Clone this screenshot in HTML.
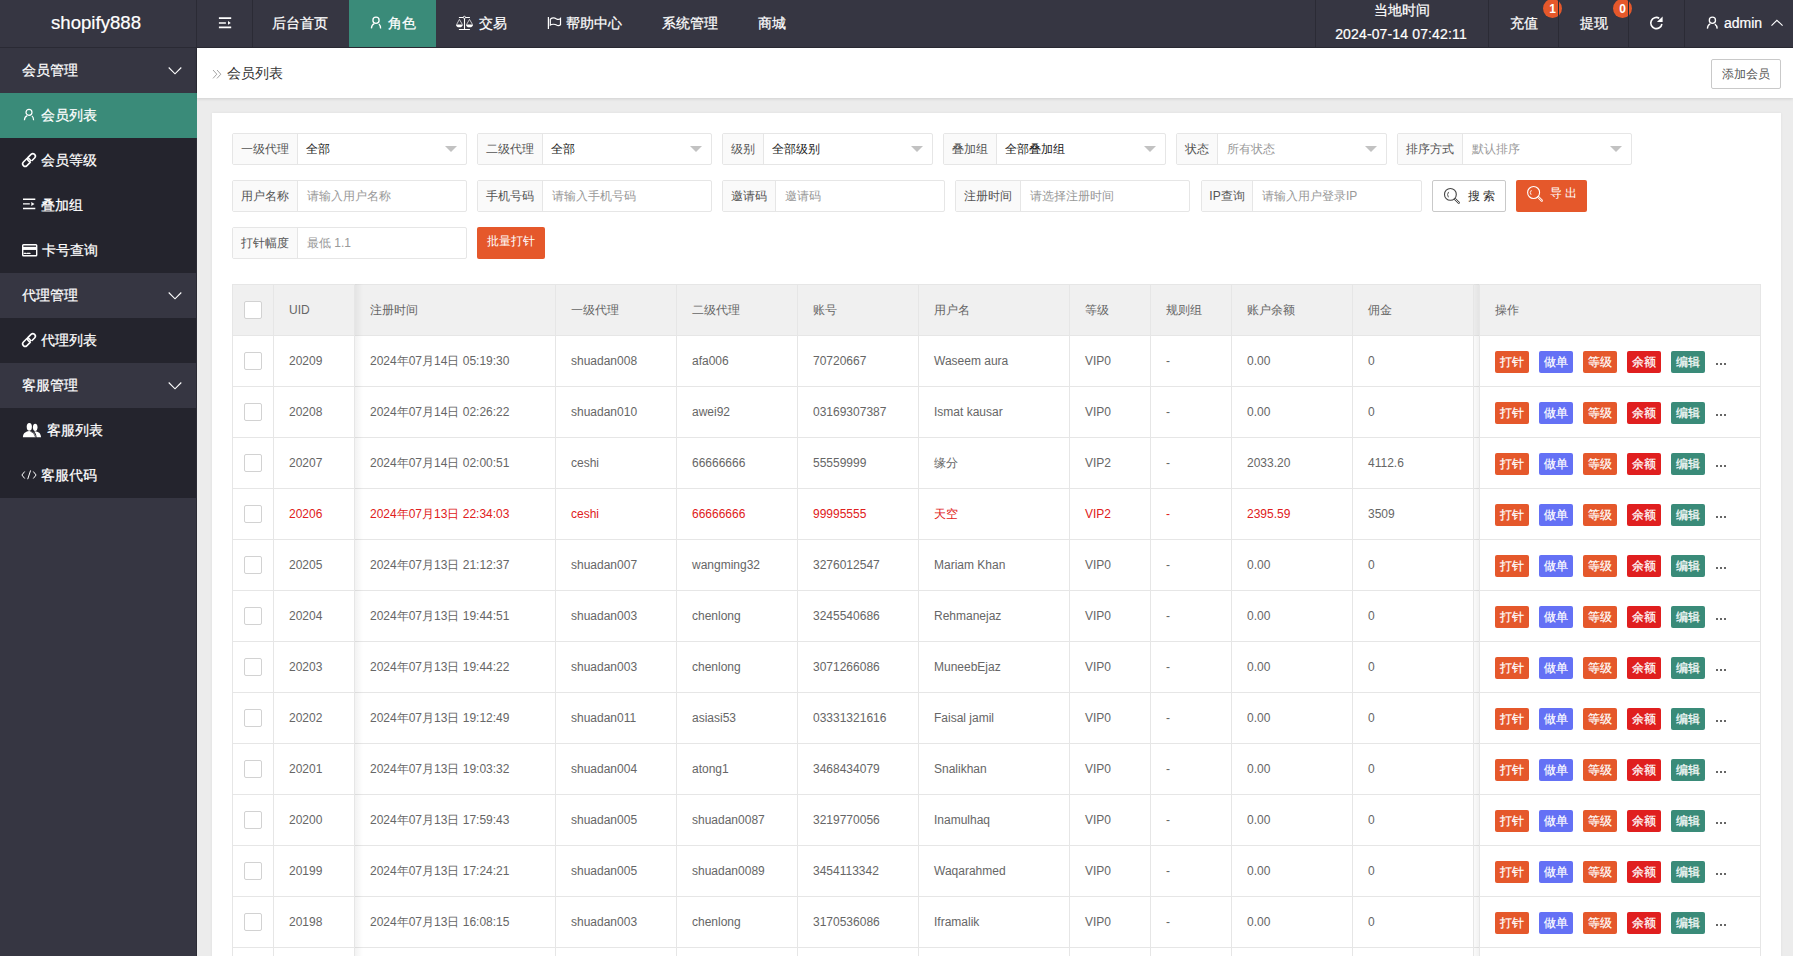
<!DOCTYPE html>
<html><head><meta charset="utf-8"><style>
*{margin:0;padding:0;box-sizing:border-box}
html,body{width:1793px;height:956px;overflow:hidden}
body{position:relative;font-family:"Liberation Sans",sans-serif;font-size:12px;color:#666;background:#ececec}
.abs{position:absolute}
#hdr{position:absolute;left:0;top:0;width:1793px;height:48px;background:#363642;border-bottom:1px solid #2a2a34}
.logo{position:absolute;left:-2px;top:0;width:196px;height:47px;line-height:46px;text-align:center;color:#fff;font-size:18.6px;-webkit-text-stroke:0.2px #fff}
.hsep{position:absolute;top:0;width:1px;height:47px;background:#2b2b35}
.nav{position:absolute;top:0;height:47px;line-height:46px;color:#fff;font-size:14px;white-space:nowrap;-webkit-text-stroke:0.22px #fff}
.nav.on{background:#3a8b79}
.ico{position:absolute}
.I,.L{position:absolute;overflow:visible}
.badge{position:absolute;top:-1px;width:19px;height:19px;border-radius:50%;background:#e5582b;color:#fff;font-size:12px;line-height:21px;text-align:center;font-weight:bold}
#side{position:absolute;left:0;top:48px;width:197px;height:908px;background:#363642;border-right:1px solid #2b2b35}
.sg{position:absolute;left:0;width:196px;height:45px;line-height:45px;color:#fff;font-size:14px;-webkit-text-stroke:0.22px #fff}
.si{position:absolute;left:0;width:196px;height:45px;line-height:45px;color:#fff;font-size:14px;background:#24242d;-webkit-text-stroke:0.22px #fff}
.si.on{background:#3a8b79;width:197px}
.si span,.sg span{position:absolute;top:0}
#crumb{position:absolute;left:197px;top:48px;width:1596px;height:50px;background:#fff;box-shadow:0 1px 3px rgba(0,0,0,.12)}
.card{position:absolute;left:212px;top:113px;width:1569px;height:860px;background:#fff;box-shadow:0 0 3px rgba(0,0,0,.06)}
.ig{position:absolute;height:32px;border:1px solid #e6e6e6;border-radius:2px;background:#fff}
.ig .lb{position:absolute;left:0;top:0;height:30px;line-height:30px;background:#fafafa;border-right:1px solid #e6e6e6;color:#555;text-align:center;font-size:12px}
.ig .vv{position:absolute;top:0;height:30px;line-height:31px;font-size:12px;color:#222;white-space:nowrap;margin-left:-1px}
.ig .ph{color:#999;margin-left:0}
.tri{position:absolute;top:12px;width:0;height:0;border-left:6px solid transparent;border-right:6px solid transparent;border-top:6px solid #c2c2c2}
.btn{position:absolute;height:32px;line-height:30px;border-radius:2px;font-size:12px;text-align:center;white-space:nowrap}
.tbl{position:absolute;overflow:hidden}
.tbl>div{position:absolute}
.thead{background:#f0f0f0}
.vl{top:0;width:1px;height:100%;background:#e6e6e6}
.hl{left:0;width:100%;height:1px;background:#e6e6e6}
.cb{width:18px;height:18px;border:1px solid #d2d2d2;border-radius:2px;background:#fff}
.th,.td{height:51px;line-height:53px;font-size:12px;color:#666;white-space:nowrap}
.td.red{color:#e02020}
.bx{width:34px;height:22px;line-height:22px;border-radius:2px;color:#fff;text-align:center;font-size:12px;-webkit-text-stroke:0.2px #fff}
.b1{background:#e5582b}.b2{background:#6471f5}.b3{background:#e01f1f}.b4{background:#3a8b79}
.dots{height:51px;line-height:51px;color:#666;font-size:12px}
.shl{top:0;width:8px;height:100%;background:linear-gradient(to right,rgba(0,0,0,.05),rgba(0,0,0,0))}
.shr{top:0;width:5px;height:100%;background:linear-gradient(to right,rgba(0,0,0,.02),rgba(0,0,0,.05))}
.dots{height:3px;line-height:0}
.dots i{display:inline-block;width:2px;height:2px;background:#666;margin-right:2px;vertical-align:top}

</style></head><body>
<div id="hdr">
 <div class="logo">shopify888</div>
 <div class="hsep" style="left:196px"></div>
 <div class="hsep" style="left:252px"></div>
 <div class="nav" style="left:253px;width:96px;padding-left:19px">后台首页</div>
 <div class="nav on" style="left:349px;width:87px"><span style="position:absolute;left:39px">角色</span></div>
 <div class="nav" style="left:436px;width:90px"><span style="position:absolute;left:43px">交易</span></div>
 <div class="nav" style="left:526px;width:116px"><span style="position:absolute;left:40px">帮助中心</span></div>
 <div class="nav" style="left:642px;width:96px;padding-left:20px">系统管理</div>
 <div class="nav" style="left:738px;width:68px;padding-left:20px">商城</div>
 <div class="hsep" style="left:1315px"></div>
 <div class="nav" style="left:1316px;width:172px"><div style="position:absolute;left:0;top:0;width:172px;line-height:20px;text-align:center">当地时间</div><div style="position:absolute;left:-1px;top:24px;width:172px;line-height:20px;text-align:center;letter-spacing:0.14px">2024-07-14 07:42:11</div></div>
 <div class="hsep" style="left:1488px"></div>
 <div class="nav" style="left:1489px;width:69px;padding-left:21px">充值</div>
 <div class="badge" style="left:1543px">1</div>
 <div class="hsep" style="left:1558px"></div>
 <div class="nav" style="left:1559px;width:69px;padding-left:21px">提现</div>
 <div class="badge" style="left:1613px">0</div>
 <div class="hsep" style="left:1628px"></div>
 <div class="hsep" style="left:1684px"></div>
 <div class="nav" style="left:1685px;width:108px"><span style="position:absolute;left:39px">admin</span></div>
</div>
<!-- header icons, page coords -->
<svg class="I" style="left:213px;top:12px" width="24" height="22"><path d="M5.9 6.1h12.3M5.9 11h7M5.9 15.4h12.3" stroke="#fff" stroke-width="1.6" fill="none"/><path d="M15 9l2.8 1.9L15 12.8z" fill="#fff"/></svg>
<svg class="I" style="left:364px;top:12px" width="24" height="22"><circle cx="12" cy="8.3" r="3.1" stroke="#fff" stroke-width="1.3" fill="none"/><path d="M7.4 16.4Q7.6 12.6 10.3 11.6M14.9 11.9Q16.5 13.3 16.6 16.4" stroke="#fff" stroke-width="1.3" fill="none"/></svg>
<svg class="I" style="left:452px;top:12px" width="24" height="22"><path d="M6.9 5.5h11M6.9 17.5h11M12.5 6.5v11" stroke="#fff" stroke-width="1.1" fill="none"/><circle cx="12.4" cy="5.4" r="1.1" stroke="#fff" stroke-width="0.9" fill="#363642"/><path d="M4.7 12.4L7.4 7.4 10.3 12.4M14.6 12.4L17.5 7.4 20.4 12.4" stroke="#fff" stroke-width="0.7" fill="none"/><path d="M4 12.4h6.8a3.4 2.8 0 0 1 -6.8 0zM14 12.4h7a3.5 2.8 0 0 1 -7 0z" fill="#fff"/></svg>
<svg class="I" style="left:543px;top:12px" width="24" height="22"><path d="M5.4 5v12" stroke="#fff" stroke-width="1.2"/><path d="M7.3 7.3C9 5.8 11.8 5.9 13.5 6.9S16.3 7.6 17.5 6.4V12.7C16.3 13.8 14.8 13.8 13.5 13S9 11.8 7.3 13.1Z" stroke="#fff" stroke-width="1.2" fill="none"/></svg>
<svg class="I" style="left:1644px;top:12px" width="24" height="22"><path d="M15.2 6.2A5.6 5.6 0 1 0 17.9 12.0" stroke="#fff" stroke-width="1.6" fill="none"/><path d="M12.9 9.9L18.6 9.9 18.6 4.4Z" fill="#fff"/></svg>
<svg class="I" style="left:1700px;top:12px" width="24" height="22"><circle cx="12.4" cy="8.3" r="3.1" stroke="#fff" stroke-width="1.3" fill="none"/><path d="M7.4 16.6Q7.6 12.8 10.2 11.8M14.9 12.1Q16.9 13.5 17.2 16.6" stroke="#fff" stroke-width="1.3" fill="none"/></svg>
<svg class="I" style="left:1766px;top:12px" width="24" height="22"><path d="M5.5 13.6L10.9 8.3 16.6 13.6" stroke="#fff" stroke-width="1.1" fill="none"/></svg>

<div id="side">
 <div class="sg" style="top:0"><span style="left:22px">会员管理</span></div>
 <div class="si on" style="top:45px"><span style="left:41px">会员列表</span></div>
 <div class="si" style="top:90px"><span style="left:41px">会员等级</span></div>
 <div class="si" style="top:135px"><span style="left:41px">叠加组</span></div>
 <div class="si" style="top:180px"><span style="left:42px">卡号查询</span></div>
 <div class="sg" style="top:225px"><span style="left:22px">代理管理</span></div>
 <div class="si" style="top:270px"><span style="left:41px">代理列表</span></div>
 <div class="sg" style="top:315px"><span style="left:22px">客服管理</span></div>
 <div class="si" style="top:360px"><span style="left:47px">客服列表</span></div>
 <div class="si" style="top:405px"><span style="left:41px">客服代码</span></div>
</div>
<!-- sidebar icons -->
<svg class="I" style="left:160px;top:60px" width="24" height="22"><path d="M8.7 7.5l6.3 6.3 6.3-6.3" stroke="#fff" stroke-width="1.1" fill="none"/></svg>
<svg class="I" style="left:160px;top:285px" width="24" height="22"><path d="M8.7 7.5l6.3 6.3 6.3-6.3" stroke="#fff" stroke-width="1.1" fill="none"/></svg>
<svg class="I" style="left:160px;top:375px" width="24" height="22"><path d="M8.7 7.5l6.3 6.3 6.3-6.3" stroke="#fff" stroke-width="1.1" fill="none"/></svg>
<svg class="I" style="left:18px;top:104px" width="24" height="22"><circle cx="11" cy="8.3" r="3.0" stroke="#fff" stroke-width="1.2" fill="none"/><path d="M6.4 16.2Q6.6 12.5 9.3 11.6M13.9 11.9Q15.5 13.3 15.6 16.2" stroke="#fff" stroke-width="1.2" fill="none"/></svg>
<svg class="L" style="left:15px;top:146px" width="24" height="24"><g transform="rotate(-45 14 14)"><rect x="6.1" y="11.5" width="8.9" height="5" rx="2.5" stroke="#fff" stroke-width="1.6" fill="none"/><rect x="13.0" y="11.5" width="8.9" height="5" rx="2.5" stroke="#fff" stroke-width="1.6" fill="none"/><path d="M13.9 17h1.4" stroke="#24242d" stroke-width="1.3"/></g></svg>
<svg class="L" style="left:15px;top:326px" width="24" height="24"><g transform="rotate(-45 14 14)"><rect x="6.1" y="11.5" width="8.9" height="5" rx="2.5" stroke="#fff" stroke-width="1.6" fill="none"/><rect x="13.0" y="11.5" width="8.9" height="5" rx="2.5" stroke="#fff" stroke-width="1.6" fill="none"/><path d="M13.9 17h1.4" stroke="#24242d" stroke-width="1.3"/></g></svg>
<svg class="I" style="left:15px;top:193px" width="24" height="22"><path d="M8 6.3h12.3M8 10.9h6.8M8 15.5h12.3" stroke="#fff" stroke-width="1.4" fill="none"/><path d="M16.3 8.9l3.2 2-3.2 2z" fill="#fff"/></svg>
<svg class="I" style="left:15px;top:238px" width="24" height="22"><rect x="7.7" y="6.7" width="14" height="11" rx="0.8" stroke="#fff" stroke-width="1.4" fill="none"/><path d="M7.7 10.4h14" stroke="#fff" stroke-width="3.1"/><path d="M9.2 15.4h1.8M12.2 15.4h2.8" stroke="#fff" stroke-width="1.2" stroke-linecap="round"/></svg>
<svg class="I" style="left:15px;top:415px" width="30" height="24"><ellipse cx="14.3" cy="11.8" rx="2.6" ry="3.9" fill="#fff"/><path d="M7.9 22.3c0-3.5 1.8-5.6 6.4-6.3 4 0.6 6.2 2.8 6.6 6.3z" fill="#fff"/><ellipse cx="20.2" cy="12.3" rx="2.3" ry="3.6" fill="#fff"/><path d="M20.5 16.2c3.5 0.5 5.4 2.4 5.6 6.1h-4.5c-0.2-2.5-0.9-4.3-2.4-5.5z" fill="#fff"/><path d="M15.5 16.2Q19.5 17.5 20.6 22.3" stroke="#24242d" stroke-width="0.7" fill="none"/></svg>
<svg class="I" style="left:15px;top:463px" width="24" height="22"><path d="M9.7 8.5L6.9 12l2.8 3.5M18.3 8.5L21.1 12l-2.8 3.5M15.6 7.4L12.7 16.2" stroke="#fff" stroke-width="1" fill="none"/></svg>

<div id="crumb">
 <svg class="I" style="left:12px;top:17px" width="14" height="16"><path d="M4 5l3.8 4.2-3.8 4.2M8 5l3.8 4.2-3.8 4.2" stroke="#999" stroke-width="0.9" fill="none"/></svg>
 <div class="abs" style="left:30px;top:0;line-height:50px;color:#333;font-size:14px">会员列表</div>
 <div class="abs" style="left:1514px;top:11px;width:70px;height:30px;border:1px solid #c9c9c9;border-radius:2px;line-height:28px;text-align:center;color:#555;font-size:12px">添加会员</div>
</div>

<div class="card"></div>

<div class="ig" style="left:232px;top:133px;width:235px"><div class="lb" style="width:65px">一级代理</div><div class="vv" style="left:74px">全部</div><div class="tri" style="left:212px"></div></div>
<div class="ig" style="left:477px;top:133px;width:235px"><div class="lb" style="width:65px">二级代理</div><div class="vv" style="left:74px">全部</div><div class="tri" style="left:212px"></div></div>
<div class="ig" style="left:722px;top:133px;width:211px"><div class="lb" style="width:41px">级别</div><div class="vv" style="left:50px">全部级别</div><div class="tri" style="left:188px"></div></div>
<div class="ig" style="left:943px;top:133px;width:223px"><div class="lb" style="width:53px">叠加组</div><div class="vv" style="left:62px">全部叠加组</div><div class="tri" style="left:200px"></div></div>
<div class="ig" style="left:1176px;top:133px;width:211px"><div class="lb" style="width:41px">状态</div><div class="vv ph" style="left:50px">所有状态</div><div class="tri" style="left:188px"></div></div>
<div class="ig" style="left:1397px;top:133px;width:235px"><div class="lb" style="width:65px">排序方式</div><div class="vv ph" style="left:74px">默认排序</div><div class="tri" style="left:212px"></div></div>

<div class="ig" style="left:232px;top:180px;width:235px"><div class="lb" style="width:65px">用户名称</div><div class="vv ph" style="left:74px">请输入用户名称</div></div>
<div class="ig" style="left:477px;top:180px;width:235px"><div class="lb" style="width:65px">手机号码</div><div class="vv ph" style="left:74px">请输入手机号码</div></div>
<div class="ig" style="left:722px;top:180px;width:223px"><div class="lb" style="width:53px">邀请码</div><div class="vv ph" style="left:62px">邀请码</div></div>
<div class="ig" style="left:955px;top:180px;width:235px"><div class="lb" style="width:65px">注册时间</div><div class="vv ph" style="left:74px">请选择注册时间</div></div>
<div class="ig" style="left:1201px;top:180px;width:221px"><div class="lb" style="width:51px">IP查询</div><div class="vv ph" style="left:60px">请输入用户登录IP</div></div>
<div class="btn" style="left:1432px;top:180px;width:74px;border:1px solid #c9c9c9;background:#fff;color:#333"><span style="position:absolute;left:35px">搜 索</span></div>
<svg class="I" style="left:1440px;top:185px" width="24" height="22"><circle cx="10.4" cy="9.4" r="5.9" stroke="#444" stroke-width="1.1" fill="none"/><path d="M8.6 6.9Q6.6 9.4 8.4 12.3" stroke="#444" stroke-width="0.9" fill="none"/><path d="M15.2 14.2l3.6 3.6" stroke="#444" stroke-width="2.3" stroke-linecap="round"/><path d="M15.2 14.2l3.6 3.6" stroke="#fff" stroke-width="0.8" stroke-linecap="round"/></svg>
<div class="btn" style="left:1516px;top:180px;width:71px;background:#e5582b;color:#fff"><span style="position:absolute;left:34px;top:-2px">导 出</span></div>
<svg class="I" style="left:1523px;top:181px" width="24" height="24"><circle cx="10.6" cy="11.5" r="6" stroke="#fff" stroke-width="1.1" fill="none"/><path d="M8.4 9.2Q6.3 11.4 8.1 13.8" stroke="#fff" stroke-width="0.9" fill="none"/><path d="M15.5 16.3l3.3 3.3" stroke="#fff" stroke-width="2.3" stroke-linecap="round"/><path d="M15.5 16.3l3.3 3.3" stroke="#e5582b" stroke-width="0.8" stroke-linecap="round"/></svg>

<div class="ig" style="left:232px;top:227px;width:235px"><div class="lb" style="width:65px">打针幅度</div><div class="vv ph" style="left:74px">最低 1.1</div></div>
<div class="btn" style="left:477px;top:227px;width:68px;background:#e5582b;color:#fff;line-height:28px">批量打针</div>

<div class="tbl" style="left:232px;top:284px;width:1529px;height:672px"><div class="thead" style="left:0;top:0;width:1528px;height:51px"></div><div class="vl" style="left:0px"></div><div class="vl" style="left:41px"></div><div class="vl" style="left:122px"></div><div class="vl" style="left:323px"></div><div class="vl" style="left:444px"></div><div class="vl" style="left:565px"></div><div class="vl" style="left:686px"></div><div class="vl" style="left:837px"></div><div class="vl" style="left:918px"></div><div class="vl" style="left:999px"></div><div class="vl" style="left:1120px"></div><div class="vl" style="left:1241px"></div><div class="vl" style="left:1247px"></div><div class="vl" style="left:1528px"></div><div class="hl" style="top:0px"></div><div class="hl" style="top:51px"></div><div class="hl" style="top:102px"></div><div class="hl" style="top:153px"></div><div class="hl" style="top:204px"></div><div class="hl" style="top:255px"></div><div class="hl" style="top:306px"></div><div class="hl" style="top:357px"></div><div class="hl" style="top:408px"></div><div class="hl" style="top:459px"></div><div class="hl" style="top:510px"></div><div class="hl" style="top:561px"></div><div class="hl" style="top:612px"></div><div class="hl" style="top:663px"></div><div class="cb" style="left:12px;top:17px"></div><div class="th" style="left:57px;top:0">UID</div><div class="th" style="left:138px;top:0">注册时间</div><div class="th" style="left:339px;top:0">一级代理</div><div class="th" style="left:460px;top:0">二级代理</div><div class="th" style="left:581px;top:0">账号</div><div class="th" style="left:702px;top:0">用户名</div><div class="th" style="left:853px;top:0">等级</div><div class="th" style="left:934px;top:0">规则组</div><div class="th" style="left:1015px;top:0">账户余额</div><div class="th" style="left:1136px;top:0">佣金</div><div class="th" style="left:1263px;top:0">操作</div><div class="cb" style="left:12px;top:68px"></div><div class="td" style="left:57px;top:51px">20209</div><div class="td" style="left:138px;top:51px">2024年07月14日 05:19:30</div><div class="td" style="left:339px;top:51px">shuadan008</div><div class="td" style="left:460px;top:51px">afa006</div><div class="td" style="left:581px;top:51px">70720667</div><div class="td" style="left:702px;top:51px">Waseem aura</div><div class="td" style="left:853px;top:51px">VIP0</div><div class="td" style="left:934px;top:51px">-</div><div class="td" style="left:1015px;top:51px">0.00</div><div class="td" style="left:1136px;top:51px">0</div><div class="bx b1" style="left:1263px;top:67px">打针</div><div class="bx b2" style="left:1307px;top:67px">做单</div><div class="bx b1" style="left:1351px;top:67px">等级</div><div class="bx b3" style="left:1395px;top:67px">余额</div><div class="bx b4" style="left:1439px;top:67px">编辑</div><div class="dots" style="left:1484px;top:79px"><i></i><i></i><i></i></div><div class="cb" style="left:12px;top:119px"></div><div class="td" style="left:57px;top:102px">20208</div><div class="td" style="left:138px;top:102px">2024年07月14日 02:26:22</div><div class="td" style="left:339px;top:102px">shuadan010</div><div class="td" style="left:460px;top:102px">awei92</div><div class="td" style="left:581px;top:102px">03169307387</div><div class="td" style="left:702px;top:102px">Ismat kausar</div><div class="td" style="left:853px;top:102px">VIP0</div><div class="td" style="left:934px;top:102px">-</div><div class="td" style="left:1015px;top:102px">0.00</div><div class="td" style="left:1136px;top:102px">0</div><div class="bx b1" style="left:1263px;top:118px">打针</div><div class="bx b2" style="left:1307px;top:118px">做单</div><div class="bx b1" style="left:1351px;top:118px">等级</div><div class="bx b3" style="left:1395px;top:118px">余额</div><div class="bx b4" style="left:1439px;top:118px">编辑</div><div class="dots" style="left:1484px;top:130px"><i></i><i></i><i></i></div><div class="cb" style="left:12px;top:170px"></div><div class="td" style="left:57px;top:153px">20207</div><div class="td" style="left:138px;top:153px">2024年07月14日 02:00:51</div><div class="td" style="left:339px;top:153px">ceshi</div><div class="td" style="left:460px;top:153px">66666666</div><div class="td" style="left:581px;top:153px">55559999</div><div class="td" style="left:702px;top:153px">缘分</div><div class="td" style="left:853px;top:153px">VIP2</div><div class="td" style="left:934px;top:153px">-</div><div class="td" style="left:1015px;top:153px">2033.20</div><div class="td" style="left:1136px;top:153px">4112.6</div><div class="bx b1" style="left:1263px;top:169px">打针</div><div class="bx b2" style="left:1307px;top:169px">做单</div><div class="bx b1" style="left:1351px;top:169px">等级</div><div class="bx b3" style="left:1395px;top:169px">余额</div><div class="bx b4" style="left:1439px;top:169px">编辑</div><div class="dots" style="left:1484px;top:181px"><i></i><i></i><i></i></div><div class="cb" style="left:12px;top:221px"></div><div class="td red" style="left:57px;top:204px">20206</div><div class="td red" style="left:138px;top:204px">2024年07月13日 22:34:03</div><div class="td red" style="left:339px;top:204px">ceshi</div><div class="td red" style="left:460px;top:204px">66666666</div><div class="td red" style="left:581px;top:204px">99995555</div><div class="td red" style="left:702px;top:204px">天空</div><div class="td red" style="left:853px;top:204px">VIP2</div><div class="td red" style="left:934px;top:204px">-</div><div class="td red" style="left:1015px;top:204px">2395.59</div><div class="td" style="left:1136px;top:204px">3509</div><div class="bx b1" style="left:1263px;top:220px">打针</div><div class="bx b2" style="left:1307px;top:220px">做单</div><div class="bx b1" style="left:1351px;top:220px">等级</div><div class="bx b3" style="left:1395px;top:220px">余额</div><div class="bx b4" style="left:1439px;top:220px">编辑</div><div class="dots" style="left:1484px;top:232px"><i></i><i></i><i></i></div><div class="cb" style="left:12px;top:272px"></div><div class="td" style="left:57px;top:255px">20205</div><div class="td" style="left:138px;top:255px">2024年07月13日 21:12:37</div><div class="td" style="left:339px;top:255px">shuadan007</div><div class="td" style="left:460px;top:255px">wangming32</div><div class="td" style="left:581px;top:255px">3276012547</div><div class="td" style="left:702px;top:255px">Mariam Khan</div><div class="td" style="left:853px;top:255px">VIP0</div><div class="td" style="left:934px;top:255px">-</div><div class="td" style="left:1015px;top:255px">0.00</div><div class="td" style="left:1136px;top:255px">0</div><div class="bx b1" style="left:1263px;top:271px">打针</div><div class="bx b2" style="left:1307px;top:271px">做单</div><div class="bx b1" style="left:1351px;top:271px">等级</div><div class="bx b3" style="left:1395px;top:271px">余额</div><div class="bx b4" style="left:1439px;top:271px">编辑</div><div class="dots" style="left:1484px;top:283px"><i></i><i></i><i></i></div><div class="cb" style="left:12px;top:323px"></div><div class="td" style="left:57px;top:306px">20204</div><div class="td" style="left:138px;top:306px">2024年07月13日 19:44:51</div><div class="td" style="left:339px;top:306px">shuadan003</div><div class="td" style="left:460px;top:306px">chenlong</div><div class="td" style="left:581px;top:306px">3245540686</div><div class="td" style="left:702px;top:306px">Rehmanejaz</div><div class="td" style="left:853px;top:306px">VIP0</div><div class="td" style="left:934px;top:306px">-</div><div class="td" style="left:1015px;top:306px">0.00</div><div class="td" style="left:1136px;top:306px">0</div><div class="bx b1" style="left:1263px;top:322px">打针</div><div class="bx b2" style="left:1307px;top:322px">做单</div><div class="bx b1" style="left:1351px;top:322px">等级</div><div class="bx b3" style="left:1395px;top:322px">余额</div><div class="bx b4" style="left:1439px;top:322px">编辑</div><div class="dots" style="left:1484px;top:334px"><i></i><i></i><i></i></div><div class="cb" style="left:12px;top:374px"></div><div class="td" style="left:57px;top:357px">20203</div><div class="td" style="left:138px;top:357px">2024年07月13日 19:44:22</div><div class="td" style="left:339px;top:357px">shuadan003</div><div class="td" style="left:460px;top:357px">chenlong</div><div class="td" style="left:581px;top:357px">3071266086</div><div class="td" style="left:702px;top:357px">MuneebEjaz</div><div class="td" style="left:853px;top:357px">VIP0</div><div class="td" style="left:934px;top:357px">-</div><div class="td" style="left:1015px;top:357px">0.00</div><div class="td" style="left:1136px;top:357px">0</div><div class="bx b1" style="left:1263px;top:373px">打针</div><div class="bx b2" style="left:1307px;top:373px">做单</div><div class="bx b1" style="left:1351px;top:373px">等级</div><div class="bx b3" style="left:1395px;top:373px">余额</div><div class="bx b4" style="left:1439px;top:373px">编辑</div><div class="dots" style="left:1484px;top:385px"><i></i><i></i><i></i></div><div class="cb" style="left:12px;top:425px"></div><div class="td" style="left:57px;top:408px">20202</div><div class="td" style="left:138px;top:408px">2024年07月13日 19:12:49</div><div class="td" style="left:339px;top:408px">shuadan011</div><div class="td" style="left:460px;top:408px">asiasi53</div><div class="td" style="left:581px;top:408px">03331321616</div><div class="td" style="left:702px;top:408px">Faisal jamil</div><div class="td" style="left:853px;top:408px">VIP0</div><div class="td" style="left:934px;top:408px">-</div><div class="td" style="left:1015px;top:408px">0.00</div><div class="td" style="left:1136px;top:408px">0</div><div class="bx b1" style="left:1263px;top:424px">打针</div><div class="bx b2" style="left:1307px;top:424px">做单</div><div class="bx b1" style="left:1351px;top:424px">等级</div><div class="bx b3" style="left:1395px;top:424px">余额</div><div class="bx b4" style="left:1439px;top:424px">编辑</div><div class="dots" style="left:1484px;top:436px"><i></i><i></i><i></i></div><div class="cb" style="left:12px;top:476px"></div><div class="td" style="left:57px;top:459px">20201</div><div class="td" style="left:138px;top:459px">2024年07月13日 19:03:32</div><div class="td" style="left:339px;top:459px">shuadan004</div><div class="td" style="left:460px;top:459px">atong1</div><div class="td" style="left:581px;top:459px">3468434079</div><div class="td" style="left:702px;top:459px">Snalikhan</div><div class="td" style="left:853px;top:459px">VIP0</div><div class="td" style="left:934px;top:459px">-</div><div class="td" style="left:1015px;top:459px">0.00</div><div class="td" style="left:1136px;top:459px">0</div><div class="bx b1" style="left:1263px;top:475px">打针</div><div class="bx b2" style="left:1307px;top:475px">做单</div><div class="bx b1" style="left:1351px;top:475px">等级</div><div class="bx b3" style="left:1395px;top:475px">余额</div><div class="bx b4" style="left:1439px;top:475px">编辑</div><div class="dots" style="left:1484px;top:487px"><i></i><i></i><i></i></div><div class="cb" style="left:12px;top:527px"></div><div class="td" style="left:57px;top:510px">20200</div><div class="td" style="left:138px;top:510px">2024年07月13日 17:59:43</div><div class="td" style="left:339px;top:510px">shuadan005</div><div class="td" style="left:460px;top:510px">shuadan0087</div><div class="td" style="left:581px;top:510px">3219770056</div><div class="td" style="left:702px;top:510px">Inamulhaq</div><div class="td" style="left:853px;top:510px">VIP0</div><div class="td" style="left:934px;top:510px">-</div><div class="td" style="left:1015px;top:510px">0.00</div><div class="td" style="left:1136px;top:510px">0</div><div class="bx b1" style="left:1263px;top:526px">打针</div><div class="bx b2" style="left:1307px;top:526px">做单</div><div class="bx b1" style="left:1351px;top:526px">等级</div><div class="bx b3" style="left:1395px;top:526px">余额</div><div class="bx b4" style="left:1439px;top:526px">编辑</div><div class="dots" style="left:1484px;top:538px"><i></i><i></i><i></i></div><div class="cb" style="left:12px;top:578px"></div><div class="td" style="left:57px;top:561px">20199</div><div class="td" style="left:138px;top:561px">2024年07月13日 17:24:21</div><div class="td" style="left:339px;top:561px">shuadan005</div><div class="td" style="left:460px;top:561px">shuadan0089</div><div class="td" style="left:581px;top:561px">3454113342</div><div class="td" style="left:702px;top:561px">Waqarahmed</div><div class="td" style="left:853px;top:561px">VIP0</div><div class="td" style="left:934px;top:561px">-</div><div class="td" style="left:1015px;top:561px">0.00</div><div class="td" style="left:1136px;top:561px">0</div><div class="bx b1" style="left:1263px;top:577px">打针</div><div class="bx b2" style="left:1307px;top:577px">做单</div><div class="bx b1" style="left:1351px;top:577px">等级</div><div class="bx b3" style="left:1395px;top:577px">余额</div><div class="bx b4" style="left:1439px;top:577px">编辑</div><div class="dots" style="left:1484px;top:589px"><i></i><i></i><i></i></div><div class="cb" style="left:12px;top:629px"></div><div class="td" style="left:57px;top:612px">20198</div><div class="td" style="left:138px;top:612px">2024年07月13日 16:08:15</div><div class="td" style="left:339px;top:612px">shuadan003</div><div class="td" style="left:460px;top:612px">chenlong</div><div class="td" style="left:581px;top:612px">3170536086</div><div class="td" style="left:702px;top:612px">Iframalik</div><div class="td" style="left:853px;top:612px">VIP0</div><div class="td" style="left:934px;top:612px">-</div><div class="td" style="left:1015px;top:612px">0.00</div><div class="td" style="left:1136px;top:612px">0</div><div class="bx b1" style="left:1263px;top:628px">打针</div><div class="bx b2" style="left:1307px;top:628px">做单</div><div class="bx b1" style="left:1351px;top:628px">等级</div><div class="bx b3" style="left:1395px;top:628px">余额</div><div class="bx b4" style="left:1439px;top:628px">编辑</div><div class="dots" style="left:1484px;top:640px"><i></i><i></i><i></i></div><div class="cb" style="left:12px;top:680px"></div><div class="shl" style="left:123px"></div><div class="shr" style="left:1242px"></div></div>
</body></html>
